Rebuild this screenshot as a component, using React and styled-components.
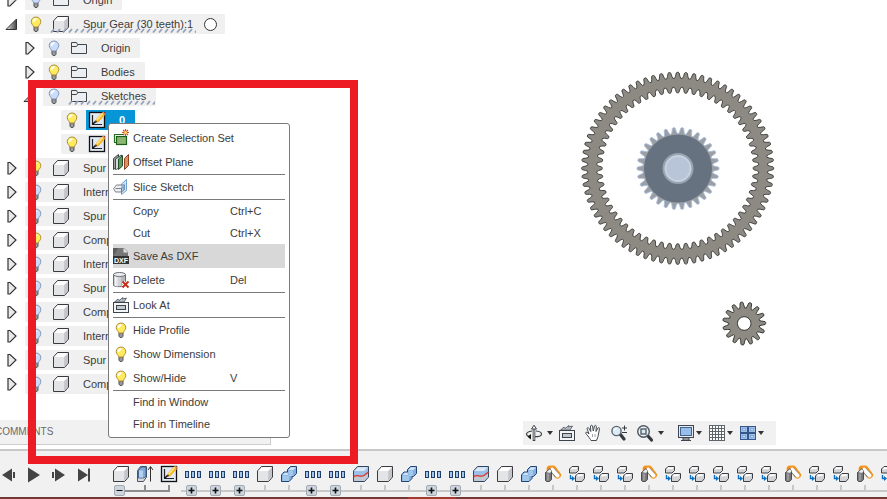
import React from "react";
import styled, { createGlobalStyle, css } from "styled-components";

const GlobalStyle = createGlobalStyle`
  * { box-sizing: border-box; }
  body {
    margin: 0;
    overflow: hidden;
    background: #fff;
    color: #3c3c3c;
    font: 11px/16px "Liberation Sans", Arial, sans-serif;
  }
  button {
    margin: 0;
    padding: 0;
    border: 0;
    background: none;
    color: inherit;
    font: inherit;
    text-align: left;
  }
  svg { display: block; flex: none; }
`;

/* ---------- icons ---------- */

const Icon = styled.svg.attrs({ viewBox: "0 0 16 16", "aria-hidden": true })`
  width: 16px;
  height: 16px;
  overflow: visible;
`;

const Bulb = ({ on = true }) => (
  <Icon>
    <path d="M6 11h4v3.200L9 15.500H7L6 14.200z" fill="#9a9a9a" stroke="#555" />
    <path
      d="M8 1C5 1 3.200 3.200 3.200 5.700c0 2.500 2.300 3.500 2.600 5.300h4.400c.3-1.800 2.600-2.800 2.600-5.300C12.800 3.200 11 1 8 1z"
      fill={on ? "#ffec5e" : "#cbdcf8"}
      stroke={on ? "#b08f3c" : "#8496bb"}
    />
    <path d="M5.500 6C5.500 4 6.500 3 8.500 3" fill="none" stroke="#fff" strokeWidth="1.800" />
  </Icon>
);

const Cube = () => (
  <Icon>
    <path d="M.5 5 4.500.5h11v10.500l-4 4.500H.5z" fill="#e3e4e6" stroke="#3b3b40" strokeLinejoin="round" />
    <path d="M1.200 5 4.900 1.200h9.800L11 5z" fill="#fff" />
    <path d="M11.200 5.200 15 1.500v9.300l-3.800 4z" fill="#c3c5c9" />
  </Icon>
);

const Folder = () => (
  <Icon>
    <path d="M.5 13.500v-11h5l1 2h9v9z" fill="#eceef1" stroke="#3f454d" />
    <path d="M1 6.500h4.500l1.500-2" fill="none" stroke="#3f454d" />
  </Icon>
);

const SketchIcon = () => (
  <Icon>
    <rect x=".5" y=".5" width="15" height="15" fill="#dfe9f8" stroke="#111" strokeWidth="1.300" />
    <path d="M3.500 3v9.500H13" fill="none" stroke="#222" strokeWidth="1.200" />
    <path d="M3.500 12.500 7 9" stroke="#111" strokeWidth="1.600" />
    <path d="M6.500 10.500 7.500 6.500 13 .500l3 2.500-6.500 7z" fill="#f6b824" />
    <path d="M7.500 7 13.300.900l1 .900-6 7z" fill="#ffe58a" />
    <path d="M13 .5l1.200-1 2.600 2.200L16 3z" fill="#e8825c" />
    <path d="M5.800 11 6.800 8.500 8.500 10z" fill="#4a3a28" />
  </Icon>
);

const SelectionSet = () => (
  <Icon>
    <path d="M11 4.500H1.500v8H3" fill="none" stroke="#256b1e" strokeWidth="1.200" />
    <rect x="3.500" y="6.500" width="10" height="8" fill="#8cb573" stroke="#1c5d17" strokeWidth="1.200" />
    <path d="M12.500-1v7M9 2.500h7M10 0l5 5M15 0l-5 5" stroke="#d9481c" strokeWidth="1.100" />
    <circle cx="12.500" cy="2.500" r="1.500" fill="#ffe06a" />
  </Icon>
);

const OffsetPlane = () => (
  <Icon>
    <path d="M.5 4.500 5.500.500v11l-5 4z" fill="#9aa0a0" stroke="#3c4444" />
    <path d="M2.500 5 8.500 1v10.500l-5 4h-1z" fill="#d6dcd8" stroke="#444d48" />
    <path d="M5.500 5 9.500 1.500v10.500l-4 3.500z" fill="#5d9a62" stroke="#234f2a" />
    <path d="M11.500 4.500 15.500.500v11l-4 4z" fill="#e08e63" stroke="#8d4324" />
  </Icon>
);

const SliceSketch = () => (
  <Icon>
    <path d="M8.500 5 13.500.500v11L8.500 15.500z" fill="#d2e6f8" stroke="#6fa0d0" />
    <path d="M.5 9.500 3.500 6h8v4.500L8.500 13h-6z" fill="#dfe3e8" fillOpacity=".6" stroke="#6b7480" strokeWidth=".9" />
    <path d="M2.500 9.500h6V13M8.500 9.500l3-3.500" fill="none" stroke="#6b7480" strokeWidth=".9" />
    <path d="M9.500 6l2-1.800v6l-2 2z" fill="#78aede" />
  </Icon>
);

const DxfText = styled.text`
  font: bold 7px/7px "Liberation Sans", Arial, sans-serif;
  fill: #fff;
`;

const DxfIcon = () => (
  <Icon>
    <path d="M0 0h11l4 4v5H0z" fill="#777" />
    <path d="M0 0h5L0 9z" fill="#5d5d5d" />
    <path d="M10.500 0v4.500H15z" fill="#e4e4e4" />
    <rect y="8" width="16" height="8" fill="#333" />
    <DxfText x="1" y="15">DXF</DxfText>
  </Icon>
);

const DeleteIcon = () => (
  <Icon>
    <path d="M.5 2.500v11c1 1.500 11 1.500 12 0v-11z" fill="#cfd2d6" stroke="#6a6e74" />
    <path d="M2.500 4v10M4 4v10.500" stroke="#f8f8f8" />
    <path d="M9 4v10M11 4v10" stroke="#9ba0a6" />
    <ellipse cx="6.500" cy="2.500" rx="6" ry="2" fill="#eceef0" stroke="#6a6e74" />
    <path d="M10 10l5 5m0-5-5 5" stroke="#fff" strokeWidth="3.500" />
    <path d="M9.500 9.500l6 6m0-6-6 6" stroke="#c62f17" strokeWidth="1.900" />
  </Icon>
);

const LookAt = () => (
  <Icon>
    <path d="M1.500 5 5 2l1 1.500L10 .500 9.500 2l4-1L11 5z" fill="#b9c0c8" stroke="#4a5058" strokeWidth=".8" />
    <rect x=".5" y="5.500" width="15" height="10" fill="#f2f4f6" stroke="#3e444c" />
    <rect x="3.500" y="8.500" width="9" height="4" fill="#c2c8d0" stroke="#3e444c" />
  </Icon>
);

const Extrude = () => (
  <Icon>
    <path d="M.5 4.500 3.500.500h6v10.500l-3 4.500h-6z" fill="#d9dadc" stroke="#4c5560" />
    <path d="M1.500 4.500 4 1h5v9.500L6.500 12h-5z" fill="#7fa9d8" stroke="#2b5288" strokeWidth=".8" />
    <path d="M2 4.500h4v7H2z" fill="#b4d2f0" />
    <path d="M13.500 15.500V1M11 4l2.500-3.500L16 4" fill="none" stroke="#333" />
  </Icon>
);

const Pattern = () => (
  <Icon>
    {[0.5, 6.5, 12.5].map((x) => (
      <rect key={x} x={x} y="5.500" width="3" height="6" fill="#a5c6ec" stroke="#1e3d69" />
    ))}
  </Icon>
);

const Combine = () => (
  <Icon>
    <path
      d="M6.500 3.500 9.500.500h6v7l-3 3h-1.500v2l-3 3h-7.500v-6.500l2.500-3h3.500z"
      fill="#83b0e0"
      stroke="#1f4474"
      strokeLinejoin="round"
    />
    <path d="M7.500 4 10 1.200h5L12.500 4zM1.500 9 3.500 6.700h3L7 9z" fill="#cfe2f6" />
    <path d="M1.500 9.500h6v-5h4.500v5.500H8v5H1.500z" fill="#a4c8ec" />
  </Icon>
);

const Split = () => (
  <Icon>
    <path d="M.5 5 4.500.5h11v10.500l-4 4.500H.5z" fill="#9cc0e8" stroke="#31475f" strokeLinejoin="round" />
    <path d="M1.200 5 4.900 1.200h9.800L11 5z" fill="#dbe8f6" />
    <path d="M1 11c3-3 5 1 10-1l4-3v4l-4 4H1z" fill="#c3c9d2" />
    <path d="M.5 11c3-3.500 6 .5 10.500-1.500l4.500-3.500" fill="none" stroke="#dd3326" strokeWidth="1.300" />
  </Icon>
);

const Joint = () => (
  <Icon>
    <path d="M5 3 8 3 12.500 9" fill="none" stroke="#f5951f" strokeWidth="7" strokeLinecap="round" strokeLinejoin="round" />
    <path d="M7.500 4 12 9.500" stroke="#8b8378" strokeWidth="5.200" />
    <path d="M7 3.500 12.500 9.500" stroke="#fff" strokeWidth="4" strokeLinecap="round" />
    <path d="M.5 6.500 5 2.500l1.500 3v8l-2 2h-3l-1-1z" fill="#77797c" stroke="#4c4c4c" strokeLinejoin="round" />
    <path d="M1.500 6 5 3 6.500 5 5 7z" fill="#ececec" />
    <path d="M3 7.500v7" stroke="#bdbdbd" />
  </Icon>
);

const ComponentIcon = () => (
  <Icon>
    <path d="M.5 3 3 .5h6.500v4L7 7H.5zM6.500 10 9 7.500h6.500v5L13 15.500H6.500z" fill="#d2d3d6" stroke="#3e3e42" strokeLinejoin="round" />
    <path d="M1.500 3.200 3.300 1.200h5.500L7 3.200zM7.500 10.200l1.800-2h5.400l-1.700 2z" fill="#fff" />
    <path d="M1.500 9v3.500H4" fill="none" stroke="#0b6fc4" strokeWidth="1.400" />
    <path d="M3 10l3 2.500L3 15z" fill="#0b6fc4" />
  </Icon>
);

const Orbit = () => (
  <Icon>
    <path d="M8 2v14" stroke="#3c424a" strokeWidth="2.600" />
    <path d="M8 2v13" stroke="#e8ebee" strokeWidth=".9" />
    <path d="M5.500 4 8 .200 10.500 4z" fill="#fff" stroke="#3c424a" />
    <path d="M6 6C3 6.500.5 7.500.5 9s2 2.500 4.500 2.700M10 6c3 .3 5.500 1.200 5.500 2.900 0 1.800-3 2.800-6.500 2.800" fill="none" stroke="#3c424a" strokeWidth="1.200" />
    <path d="M5 9v5.500L1.500 11.700z" fill="#111" />
  </Icon>
);

const Hand = () => (
  <Icon>
    <path
      d="M5.500 14.500C4 12 1.500 9.500.5 8c.7-1.500 2-.8 3.500 1L2 3.500c.5-1.200 1.500-1.200 2 0l1.800 3L5.500 1c.5-1 1.700-1 2 0l.8 5L9.500 1c.5-1 1.700-.7 1.800.3L11 6.500l2-3.500c.8-.8 1.800-.2 1.500.8L13 11.500l-1.500 4H6z"
      fill="#fff"
      stroke="#444a52"
      strokeLinejoin="round"
    />
    <path d="M7.500 9v3M10 9v3" stroke="#a3a8ae" />
  </Icon>
);

const ZoomIcon = () => (
  <Icon>
    <path d="M9 9l4 5" stroke="#343a40" strokeWidth="3.200" strokeLinecap="round" />
    <circle cx="5.500" cy="6" r="4.600" fill="#dcebf8" stroke="#5a6670" strokeWidth="1.400" />
    <path d="M3 5.500C3.500 4 4.500 3.500 6 3.500" fill="none" stroke="#fff" strokeWidth="1.500" />
    <path d="M11 3h5M13.500.500v5M11 7.500h5" stroke="#343a40" />
  </Icon>
);

const ZoomWindow = () => (
  <Icon>
    <path d="M10.500 10.500l4 4.500" stroke="#343a40" strokeWidth="3.200" strokeLinecap="round" />
    <circle cx="6.500" cy="6.500" r="5.800" fill="#eef2f5" stroke="#4d555e" strokeWidth="1.400" />
    <rect x="4" y="4" width="5" height="5" fill="#dce9ef" stroke="#4f5f6c" strokeWidth="1.400" />
  </Icon>
);

const Monitor = () => (
  <Icon>
    <path d="M5 13h6v2H5zM3 15.500h10" fill="#ddd" stroke="#3d4652" />
    <rect x=".5" y=".5" width="15" height="12" fill="#e8eaed" stroke="#3d4652" />
    <rect x="2.500" y="2.500" width="11" height="8" fill="#98bfec" stroke="#41658f" />
  </Icon>
);

const GridIcon = () => (
  <Icon>
    <path d="M0 0h16v16H0z" fill="#fff" />
    <path d="M.5 0v16M3.500 0v16M6.500 0v16M9.500 0v16M12.500 0v16M15.500 0v16M0 .5h16M0 3.500h16M0 6.500h16M0 9.500h16M0 12.500h16M0 15.500h16" stroke="#5d646c" />
  </Icon>
);

const Views = () => (
  <Icon>
    {[[0.5, 1.5], [8.5, 1.5], [0.5, 8.5], [8.5, 8.5]].map(([x, y]) => (
      <g key={`${x}-${y}`}>
        <rect x={x} y={y} width="7" height="6" fill="#9dbfe9" stroke="#34568a" />
        <rect x={x + 2} y={y + 2} width="3" height="2" fill="#c4d9f3" stroke="#6f95c6" strokeWidth=".6" />
      </g>
    ))}
  </Icon>
);

const Caret = () => (
  <svg width="6" height="4" viewBox="0 0 6 4" aria-hidden="true">
    <path d="M0 0h6L3 4z" fill="#333" />
  </svg>
);

/* ---------- shell ---------- */

const Page = styled.div`
  position: relative;
  display: flex;
  flex-direction: column;
  height: 100vh;
  overflow: hidden;
`;

const Workspace = styled.main`
  flex: 1;
  min-height: 0;
  display: grid;
  grid-template-columns: 271px minmax(0, 1fr);
`;

const Sidebar = styled.aside`
  display: flex;
  flex-direction: column;
  justify-content: space-between;
  min-height: 0;
  padding-bottom: 4px;
`;

const CommentsBar = styled.button`
  flex: none;
  height: 25px;
  padding-left: 0;
  border: solid #ccc;
  border-width: 0 1px 1px 0;
  background: #f1f1f1;
  color: #6a6a6a;
  font-size: 10px;
  text-indent: -5px;
`;

/* ---------- browser tree ---------- */

const Tree = styled.ul`
  margin: -12px 0 0;
  padding: 0;
  list-style: none;
`;

const Row = styled.li`
  display: flex;
  align-items: center;
  height: 24px;
  padding-left: ${({ $depth }) => $depth * 18}px;
`;

const Toggle = styled.button`
  width: 25px;
  height: 20px;
  padding-left: 4px;
`;

const Strip = styled.div`
  position: relative;
  display: flex;
  align-items: center;
  min-width: ${({ $wide }) => ($wide ? "96px" : "0")};
  height: 20px;
  background: #f0f0f0;
`;

const BulbButton = styled.button`
  width: 25px;
  padding-left: 3px;
`;

const NameButton = styled.button`
  display: flex;
  align-items: center;
  gap: 14px;
  height: 20px;
  padding: 0 10px 0 3px;
  white-space: nowrap;
  ${({ $selected }) =>
    $selected &&
    css`
      background: #0696d7;
      color: #fff;
      font-weight: bold;
    `}
`;

const ActiveRadio = styled.input`
  appearance: none;
  width: 13px;
  height: 13px;
  margin: 0 8px 0 1px;
  border: 1px solid #333;
  border-radius: 50%;
  background: #fff;
`;

const Hatch = styled.svg`
  position: absolute;
  left: 25px;
  bottom: 1px;
  width: calc(100% - ${({ $inset }) => $inset}px);
  height: 5px;
  pointer-events: none;
`;

const HatchMarks = ({ id, inset }) => (
  <Hatch $inset={inset} aria-hidden="true">
    <defs>
      <pattern id={id} width="6" height="5" patternUnits="userSpaceOnUse">
        <path d="M1 4.500 4 1" stroke="#94a2bb" strokeWidth="1.800" />
      </pattern>
    </defs>
    <rect width="100%" height="5" fill={`url(#${id})`} />
  </Hatch>
);

const Arrow = ({ open }) => (
  <svg width="14" height="14" viewBox="0 0 14 14" aria-hidden="true">
    <defs>
      <linearGradient id="arrowFill">
        <stop offset="0" stopColor="#eee" />
        <stop offset="1" stopColor="#444" />
      </linearGradient>
    </defs>
    {open ? (
      <path d="M2 12.500h10.500V2z" fill="url(#arrowFill)" stroke="#333" />
    ) : (
      <path d="M4 1.500v11.500h2L12 7 6 1.500z" fill="#e9e9e9" stroke="#333" strokeWidth="1.200" />
    )}
  </svg>
);

const nodes = [
  { label: "Origin", depth: 0, icon: Folder, on: false },
  { label: "Spur Gear (30 teeth):1", depth: 0, icon: Cube, on: true, open: true, hatch: 54, radio: true },
  { label: "Origin", depth: 1, icon: Folder, on: false },
  { label: "Bodies", depth: 1, icon: Folder, on: true },
  { label: "Sketches", depth: 1, icon: Folder, on: false, open: true, hatch: 26 },
  { label: "0", depth: 2, icon: SketchIcon, on: true, leaf: true, selected: true },
  { label: "", depth: 2, icon: SketchIcon, on: true, leaf: true },
  { label: "Spur", depth: 0, icon: Cube, on: true, wide: true },
  { label: "Intern", depth: 0, icon: Cube, on: false, wide: true },
  { label: "Spur", depth: 0, icon: Cube, on: false, wide: true },
  { label: "Comp", depth: 0, icon: Cube, on: true, wide: true },
  { label: "Intern", depth: 0, icon: Cube, on: false, wide: true },
  { label: "Spur", depth: 0, icon: Cube, on: false, wide: true },
  { label: "Comp", depth: 0, icon: Cube, on: false, wide: true },
  { label: "Intern", depth: 0, icon: Cube, on: false, wide: true },
  { label: "Spur", depth: 0, icon: Cube, on: false, wide: true },
  { label: "Comp", depth: 0, icon: Cube, on: false, wide: true },
];

const LeafSpace = styled.span`
  width: 25px;
`;

const TreeNode = ({ node, index }) => {
  const NodeIcon = node.icon;
  return (
    <Row $depth={node.depth}>
      {node.leaf ? (
        <LeafSpace />
      ) : (
        <Toggle aria-label="Expand" aria-expanded={!!node.open}>
          <Arrow open={node.open} />
        </Toggle>
      )}
      <Strip $wide={node.wide}>
        <BulbButton aria-label="Visibility" aria-pressed={node.on}>
          <Bulb on={node.on} />
        </BulbButton>
        <NameButton $selected={node.selected} aria-label={node.label || "Sketch"}>
          <NodeIcon />
          {node.label}
        </NameButton>
        {node.radio && <ActiveRadio type="radio" name="active" aria-label="Activate component" />}
        {node.hatch && <HatchMarks id={`hatch${index}`} inset={node.hatch} />}
      </Strip>
    </Row>
  );
};

/* ---------- context menu ---------- */

const Menu = styled.div`
  position: absolute;
  left: 108px;
  top: 123px;
  width: 182px;
  padding: 2px 4px;
  border: 1px solid #7a7a7a;
  border-radius: 3px;
  background: #fff;
`;

const MenuItem = styled.button`
  display: grid;
  grid-template-columns: 20px 97px 1fr;
  align-items: center;
  width: 100%;
  height: ${({ $plain }) => ($plain ? "22px" : "24px")};
  background: ${({ $active }) => ($active ? "#d8d8d8" : "none")};
  white-space: nowrap;
`;

const Separator = styled.hr`
  height: 1px;
  margin: 0;
  border: 0;
  background: #7a7a7a;
`;

const menuItems = [
  { label: "Create Selection Set", icon: SelectionSet },
  { label: "Offset Plane", icon: OffsetPlane },
  null,
  { label: "Slice Sketch", icon: SliceSketch },
  null,
  { label: "Copy", keys: "Ctrl+C" },
  { label: "Cut", keys: "Ctrl+X" },
  { label: "Save As DXF", icon: DxfIcon, active: true },
  { label: "Delete", icon: DeleteIcon, keys: "Del" },
  null,
  { label: "Look At", icon: LookAt },
  null,
  { label: "Hide Profile", icon: Bulb },
  { label: "Show Dimension", icon: Bulb },
  { label: "Show/Hide", icon: Bulb, keys: "V" },
  null,
  { label: "Find in Window" },
  { label: "Find in Timeline" },
];

const ContextMenu = () => (
  <Menu role="menu">
    {menuItems.map((item, i) => {
      if (!item) return <Separator key={i} />;
      const ItemIcon = item.icon;
      return (
        <MenuItem key={i} role="menuitem" $plain={!ItemIcon} $active={item.active}>
          {ItemIcon ? <ItemIcon /> : <span />}
          <span>{item.label}</span>
          <span>{item.keys}</span>
        </MenuItem>
      );
    })}
  </Menu>
);

const HighlightFrame = styled.div`
  position: absolute;
  left: 28px;
  top: 80px;
  width: 330px;
  height: 384px;
  border: 8px solid #ed1c24;
  pointer-events: none;
`;

/* ---------- model view ---------- */

const Viewport = styled.section`
  display: flex;
  flex-direction: column;
  justify-content: space-between;
  min-width: 0;
  padding: 60px 0 4px 252px;
`;

const gearPath = (cx, cy, teeth, root, tip, phase = 0) => {
  const step = (Math.PI * 2) / teeth;
  const points = [];
  const profile = [[-0.4, 0], [-0.28, 0.35], [-0.17, 0.9], [-0.08, 1], [0.08, 1], [0.17, 0.9], [0.28, 0.35], [0.4, 0]];
  for (let i = 0; i < teeth; i += 1) {
    profile.forEach(([offset, rise]) => {
      const a = (i + phase + offset) * step - Math.PI / 2;
      const r = root + (tip - root) * rise;
      points.push(`${(cx + r * Math.cos(a)).toFixed(2)} ${(cy + r * Math.sin(a)).toFixed(2)}`);
    });
  }
  return `M${points.join("L")}Z`;
};

const Gears = () => (
  <svg width="260" height="300" viewBox="523 60 260 300" role="img" aria-label="Gear model">
    <path
      d={gearPath(677.7, 168.3, 72, 90, 96) + gearPath(677.7, 168.3, 60, 81, 75.5)}
      fill="#8c8a83"
      fillRule="evenodd"
      stroke="#2a2a27"
      strokeWidth=".8"
    />
    <path d={gearPath(678, 168.500, 30, 35, 41, 0.5)} fill="#9b9fa3" stroke="#a9bedd" strokeWidth=".9" />
    <circle cx="678" cy="168.500" r="34" fill="#66727f" />
    <circle cx="678" cy="168.500" r="15.500" fill="#98a4b1" />
    <circle cx="678" cy="168.500" r="12.500" fill="#b8c5d8" stroke="#c8d1dd" strokeWidth="2" />
    <path
      d={`${gearPath(744.2, 323.5, 15, 15.5, 21.5, -0.3)}M751 323.500a6.800 6.800 0 1 0-13.600 0a6.800 6.800 0 1 0 13.600 0Z`}
      fill="#8c8a83"
      fillRule="evenodd"
      stroke="#2a2a27"
      strokeWidth=".9"
    />
  </svg>
);

const NavBar = styled.div`
  display: flex;
  align-items: center;
  width: 253px;
  height: 24px;
  padding: 0 3px;
  background: #f1f1f1;
`;

const NavButton = styled.button`
  display: flex;
  align-items: center;
  gap: ${({ $loose }) => ($loose ? "5px" : "2px")};
  margin-right: ${({ $after }) => $after}px;
`;

const tools = [
  { name: "Orbit", icon: Orbit, caret: true, loose: true, after: 6 },
  { name: "Look at", icon: LookAt, after: 10 },
  { name: "Pan", icon: Hand, after: 10 },
  { name: "Zoom", icon: ZoomIcon, after: 10 },
  { name: "Zoom window", icon: ZoomWindow, caret: true, loose: true, after: 14 },
  { name: "Display settings", icon: Monitor, caret: true, after: 7 },
  { name: "Grid", icon: GridIcon, caret: true, after: 7 },
  { name: "Viewports", icon: Views, caret: true, after: 0 },
];

/* ---------- timeline ---------- */

const TimelineBar = styled.footer`
  flex: none;
  display: flex;
  height: 48px;
  padding-top: 15px;
  border-top: 2px solid #c8c8c8;
  background: #f1f1f1;
  overflow: hidden;
`;

const Playback = styled.div`
  flex: none;
  display: flex;
  gap: 9px;
  width: 109px;
  height: 18px;
`;

const PlayButton = styled.button`
  width: 16px;
  height: 18px;
`;

const Features = styled.div`
  flex: 1;
  min-width: 0;
  display: flex;
`;

const Feature = styled.div`
  flex: none;
  display: flex;
  flex-direction: column;
  align-items: center;
  gap: 3px;
  width: 24px;
`;

const Track = styled.div`
  display: flex;
  flex-direction: column;
  align-items: center;
  width: 24px;
  height: 11px;
`;

const Tick = styled.span`
  width: 2px;
  height: 5px;
  background: ${({ $dark }) => ($dark ? "#8c8c8c" : "#c8c8c8")};
`;

const Line = styled.span`
  width: ${({ $end }) => ($end ? "13px" : "24px")};
  height: 2px;
  align-self: flex-start;
  background: ${({ $dark }) => ($dark ? "#8c8c8c" : "#c8c8c8")};
`;

const GroupTrack = styled.div`
  display: flex;
  align-items: center;
  width: 24px;
  height: 11px;
  padding-left: 5px;
  background: linear-gradient(${({ $dark }) => ($dark ? "#8c8c8c, #8c8c8c" : "#c8c8c8, #c8c8c8")}) no-repeat
    ${({ $dark }) => ($dark ? "right 5px / 50% 2px" : "0 5px / 100% 2px")};
`;

const GroupButton = styled.button`
  width: 11px;
  height: 11px;
  border: 1px solid #a2aab4;
  border-radius: 2px;
  background: #cfd5dc;
`;

const kinds = {
  b: ["Body", Cube],
  e: ["Extrude", Extrude],
  s: ["Sketch", SketchIcon],
  p: ["Pattern", Pattern],
  u: ["Combine", Combine],
  x: ["Split", Split],
  j: ["Joint", Joint],
  c: ["Component", ComponentIcon],
};
const features = "bespppbuppxbuppxbujcccjcccccjccjc".split("");

const FeatureCell = ({ kind, index }) => {
  const [name, KindIcon] = kinds[kind];
  const dark = index < 3;
  const grouped = kind === "p" || index === 0;
  return (
    <Feature>
      <button aria-label={name}>
        <KindIcon />
      </button>
      {grouped ? (
        <GroupTrack $dark={dark}>
          <GroupButton aria-label={dark ? "Collapse group" : "Expand group"}>
            <svg width="9" height="9" viewBox="0 0 9 9" aria-hidden="true">
              <path d={dark ? "M1.500 4.500h6" : "M1.500 4.500h6M4.500 1.500v6"} stroke="#111" strokeWidth={dark ? 1 : 1.6} />
            </svg>
          </GroupButton>
        </GroupTrack>
      ) : (
        <Track>
          <Tick $dark={dark} />
          <Line $dark={dark} $end={index === 2} />
        </Track>
      )}
    </Feature>
  );
};

const playback = [
  ["Step back", "M2 9 12 2.500v13zM13 6h2v6h-2z"],
  ["Play", "M3 1.500 15 9 3 16.500z"],
  ["Step forward", "M2 6h2v6H2zM5 2.500 15 9 5 15.500z"],
  ["Go to end", "M3 2.500 13 9 3 15.500zM13 2.500h2v13h-2z"],
];

const Desktop = styled.div`
  flex: none;
  height: 2px;
  background: linear-gradient(#a33a2e, #a33a2e) no-repeat 408px 0 / 48px 2px #713a33;
`;

export default function App() {
  return (
    <Page>
      <GlobalStyle />
      <Workspace>
        <Sidebar>
          <Tree>
            {nodes.map((node, i) => (
              <TreeNode key={i} node={node} index={i} />
            ))}
          </Tree>
          <CommentsBar>COMMENTS</CommentsBar>
        </Sidebar>
        <Viewport>
          <Gears />
          <NavBar role="toolbar" aria-label="Navigation">
            {tools.map(({ name, icon: ToolIcon, caret, loose, after }) => (
              <NavButton key={name} aria-label={name} $loose={loose} $after={after}>
                <ToolIcon />
                {caret && <Caret />}
              </NavButton>
            ))}
          </NavBar>
        </Viewport>
      </Workspace>
      <TimelineBar>
        <Playback>
          {playback.map(([name, d]) => (
            <PlayButton key={name} aria-label={name}>
              <svg width="16" height="18" viewBox="0 0 16 18" aria-hidden="true">
                <path d={d} fill="#444" />
              </svg>
            </PlayButton>
          ))}
        </Playback>
        <Features>
          {features.map((kind, i) => (
            <FeatureCell key={i} kind={kind} index={i} />
          ))}
        </Features>
      </TimelineBar>
      <Desktop />
      <ContextMenu />
      <HighlightFrame />
    </Page>
  );
}
